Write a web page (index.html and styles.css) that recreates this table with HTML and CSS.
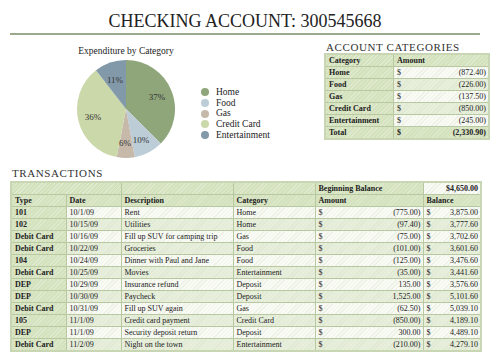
FILE: index.html
```html
<!DOCTYPE html>
<html lang="en">
<head>
    <meta charset="UTF-8">
    <meta name="viewport" content="width=device-width, initial-scale=1.0">
    <title>Checking Account</title>
    <link rel="stylesheet" href="styles.css">
</head>
<body>

    <h1>CHECKING ACCOUNT: 300545668</h1>

    <div class="top">
        <!-- Pie chart -->
        <div class="chart">
            <div class="chart-main">
                <div class="chart-title">Expenditure by Category</div>
                <svg class="pie" width="100" height="100" viewBox="0 0 100 100">
                    <path d="M50 50 L50 1 A49 49 0 0 1 84.81 84.49 Z" fill="#8fa67b"/>
                    <path d="M50 50 L84.81 84.49 A49 49 0 0 1 58.80 98.21 Z" fill="#bccdd8"/>
                    <path d="M50 50 L58.80 98.21 A49 49 0 0 1 40.73 98.12 Z" fill="#c6b9aa"/>
                    <path d="M50 50 L40.73 98.12 A49 49 0 0 1 19.97 11.28 Z" fill="#cbd8a9"/>
                    <path d="M50 50 L19.97 11.28 A49 49 0 0 1 50 1 Z" fill="#8299a9"/>
                    <text x="81" y="41">37%</text>
                    <text x="65" y="84">10%</text>
                    <text x="49" y="87">6%</text>
                    <text x="17" y="61">36%</text>
                    <text x="39" y="24">11%</text>
                </svg>
            </div>
            <ul class="legend">
                <li><span class="dot home"></span>Home</li>
                <li><span class="dot food"></span>Food</li>
                <li><span class="dot gas"></span>Gas</li>
                <li><span class="dot credit"></span>Credit Card</li>
                <li><span class="dot fun"></span>Entertainment</li>
            </ul>
        </div>

        <!-- Account categories -->
        <div class="accounts">
            <h2>ACCOUNT CATEGORIES</h2>
            <table class="grid cats">
                <tr class="head"><td>Category</td><td>Amount</td></tr>
                <tr class="odd"><td class="key">Home</td><td class="money"><span>$</span>(872.40)</td></tr>
                <tr class="even"><td class="key">Food</td><td class="money"><span>$</span>(226.00)</td></tr>
                <tr class="odd"><td class="key">Gas</td><td class="money"><span>$</span>(137.50)</td></tr>
                <tr class="even"><td class="key">Credit Card</td><td class="money"><span>$</span>(850.00)</td></tr>
                <tr class="odd"><td class="key">Entertainment</td><td class="money"><span>$</span>(245.00)</td></tr>
                <tr class="head total"><td>Total</td><td class="money"><span>$</span>(2,330.90)</td></tr>
            </table>
        </div>
    </div>

    <!-- Transactions -->
    <div class="transactions">
        <h2>TRANSACTIONS</h2>
        <table class="grid trans">
            <colgroup>
                <col class="c-type"><col class="c-date"><col class="c-desc">
                <col class="c-cat"><col class="c-amt"><col class="c-bal">
            </colgroup>
            <tr class="head">
                <td colspan="2"></td><td></td><td></td>
                <td>Beginning Balance</td>
                <td class="plain right">$4,650.00</td>
            </tr>
            <tr class="head">
                <td>Type</td><td>Date</td><td>Description</td><td>Category</td><td>Amount</td><td>Balance</td>
            </tr>
            <tr class="odd"><td class="key">101</td><td>10/1/09</td><td>Rent</td><td>Home</td><td class="money"><span>$</span>(775.00)</td><td class="money"><span>$</span>3,875.00</td></tr>
            <tr class="even"><td class="key">102</td><td>10/15/09</td><td>Utilities</td><td>Home</td><td class="money"><span>$</span>(97.40)</td><td class="money"><span>$</span>3,777.60</td></tr>
            <tr class="odd"><td class="key">Debit Card</td><td>10/16/09</td><td>Fill up SUV for camping trip</td><td>Gas</td><td class="money"><span>$</span>(75.00)</td><td class="money"><span>$</span>3,702.60</td></tr>
            <tr class="even"><td class="key">Debit Card</td><td>10/22/09</td><td>Groceries</td><td>Food</td><td class="money"><span>$</span>(101.00)</td><td class="money"><span>$</span>3,601.60</td></tr>
            <tr class="odd"><td class="key">104</td><td>10/24/09</td><td>Dinner with Paul and Jane</td><td>Food</td><td class="money"><span>$</span>(125.00)</td><td class="money"><span>$</span>3,476.60</td></tr>
            <tr class="even"><td class="key">Debit Card</td><td>10/25/09</td><td>Movies</td><td>Entertainment</td><td class="money"><span>$</span>(35.00)</td><td class="money"><span>$</span>3,441.60</td></tr>
            <tr class="odd"><td class="key">DEP</td><td>10/29/09</td><td>Insurance refund</td><td>Deposit</td><td class="money"><span>$</span>135.00</td><td class="money"><span>$</span>3,576.60</td></tr>
            <tr class="even"><td class="key">DEP</td><td>10/30/09</td><td>Paycheck</td><td>Deposit</td><td class="money"><span>$</span>1,525.00</td><td class="money"><span>$</span>5,101.60</td></tr>
            <tr class="odd"><td class="key">Debit Card</td><td>10/31/09</td><td>Fill up SUV again</td><td>Gas</td><td class="money"><span>$</span>(62.50)</td><td class="money"><span>$</span>5,039.10</td></tr>
            <tr class="even"><td class="key">105</td><td>11/1/09</td><td>Credit card payment</td><td>Credit Card</td><td class="money"><span>$</span>(850.00)</td><td class="money"><span>$</span>4,189.10</td></tr>
            <tr class="odd"><td class="key">DEP</td><td>11/1/09</td><td>Security deposit return</td><td>Deposit</td><td class="money"><span>$</span>300.00</td><td class="money"><span>$</span>4,489.10</td></tr>
            <tr class="even"><td class="key">Debit Card</td><td>11/2/09</td><td>Night on the town</td><td>Entertainment</td><td class="money"><span>$</span>(210.00)</td><td class="money"><span>$</span>4,279.10</td></tr>
        </table>
    </div>

</body>
</html>
```

FILE: styles.css
```css
body {
    font-family: "Liberation Serif", "DejaVu Serif", serif;
    margin: 0;
    padding: 0;
    background-color: #fff;
    color: #222;
    width: 500px;
}

h1 {
    font-size: 18px;
    font-weight: normal;
    text-align: center;
    margin: 0 20px 0 10px;
    padding: 13px 0 4px;
    line-height: 16px;
    border-bottom: 2px solid #9ba98b;
}

h2 {
    font-size: 11px;
    font-weight: normal;
    letter-spacing: 0.6px;
    margin: 0;
    line-height: 12px;
    color: #333;
}

.top {
    display: flex;
    padding: 0 10px;
    height: 132px;
}

/* Chart */
.chart {
    display: flex;
    width: 304px;
    padding-left: 56px;
}

.chart-main {
    width: 120px;
    display: flex;
    flex-direction: column;
    align-items: center;
}

.chart-title {
    font-size: 9.5px;
    margin-top: 10px;
    line-height: 12px;
}

.pie {
    margin-top: 2px;
}

.pie text {
    font-family: "Liberation Serif", "DejaVu Serif", serif;
    font-size: 9px;
    text-anchor: middle;
    fill: #333;
}

.legend {
    list-style: none;
    margin: 52px 0 0 15px;
    padding: 0;
    font-size: 9.5px;
    line-height: 10.7px;
}

.legend li {
    display: flex;
    align-items: center;
}

.dot {
    width: 8px;
    height: 8px;
    border-radius: 50%;
    margin-right: 7px;
}

.home { background-color: #8fa67b; }
.food { background-color: #bccdd8; }
.gas { background-color: #c6b9aa; }
.credit { background-color: #cbd8a9; }
.fun { background-color: #8299a9; }

/* Account categories */
.accounts {
    flex: 1;
    padding-top: 7px;
}

.accounts h2 {
    padding-left: 2px;
    line-height: 10px;
    margin-bottom: 1px;
}

/* Tables */
.grid {
    border-collapse: collapse;
    border: 2px solid #c8d6b4;
    font-size: 8px;
    line-height: 10px;
}

.grid td {
    border: 1px solid #b8c8a0;
    padding: 0 2px 0 3px;
    height: 11px;
    white-space: nowrap;
    background-color: #fbfcf8;
    background-image: repeating-linear-gradient(135deg, rgba(200, 214, 180, 0.35) 0 1px, transparent 1px 3px);
}

.grid .even td {
    background-color: #e9f0de;
}

.grid .head td,
.grid td.key {
    font-weight: bold;
    background-color: #d3e1bc;
    background-image: repeating-linear-gradient(135deg, rgba(255, 255, 255, 0.3) 0 1px, transparent 1px 3px);
}

.grid .head td.plain {
    background-color: #fbfcf8;
    background-image: repeating-linear-gradient(135deg, rgba(200, 214, 180, 0.35) 0 1px, transparent 1px 3px);
}

.money {
    text-align: right;
}

.money span {
    float: left;
}

.right {
    text-align: right;
}

.cats {
    width: 166px;
}

.cats td:first-child {
    width: 62px;
}

.transactions {
    padding: 0 10px;
}

.transactions h2 {
    padding-left: 2px;
    margin-bottom: 2px;
}

.trans {
    width: 470px;
    table-layout: fixed;
}

.c-type { width: 55px; }
.c-date { width: 55px; }
.c-desc { width: 112px; }
.c-cat { width: 82px; }
.c-amt { width: 108px; }
.c-bal { width: 58px; }
```
